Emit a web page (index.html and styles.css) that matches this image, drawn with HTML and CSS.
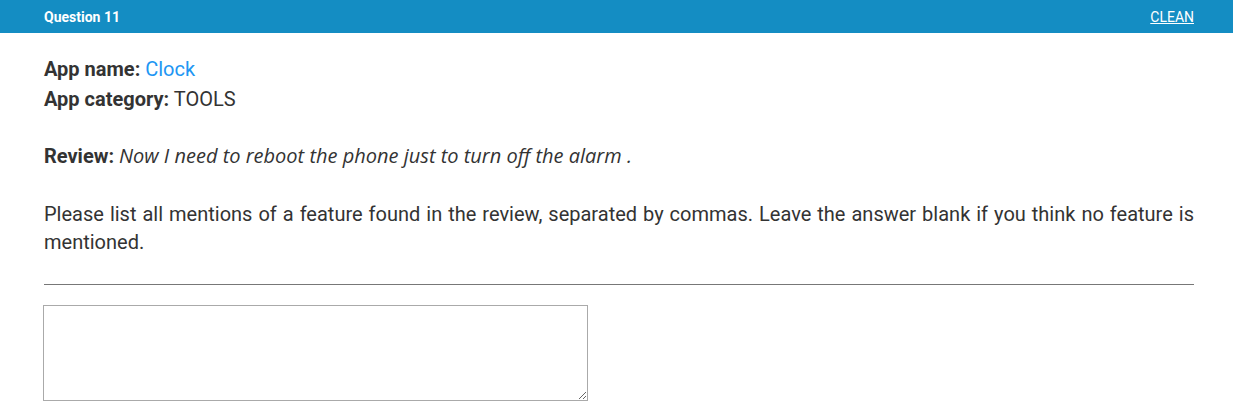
FILE: index.html
```html
<!DOCTYPE html>
<html>
<head>
<meta charset="utf-8">
<link rel="stylesheet" href="styles.css">
</head>
<body>
<div class="bar">
  <span class="title">Question 11</span>
  <a class="clean" href="#">CLEAN</a>
</div>
<div class="content">
  <div class="line"><b>App name:</b> <span class="app">Clock</span></div>
  <div class="line"><b>App category:</b> TOOLS</div>
  <div class="review"><b>Review:</b> <i>Now I need to reboot the phone just to turn off the alarm .</i></div>
  <p class="prompt">Please list all mentions of a feature found in the review, separated by commas. Leave the answer blank if you think no feature is mentioned.</p>
  <hr class="sep">
  <textarea class="answer"></textarea>
</div>
</body>
</html>
```
FILE: styles.css
```css
html, body { margin: 0; padding: 0; background: #fff; }
body { font-family: Roboto, "Liberation Sans", sans-serif; color: #333; }
.bar {
  height: 33px;
  background: #148dc3;
  display: flex;
  align-items: center;
  justify-content: space-between;
  padding: 0 39px 0 44px;
  color: #fff;
  font-size: 14px;
  font-weight: bold;
}
.clean { color: #fff; text-decoration: underline; font-size: 14px; font-weight: normal; }
.content { padding: 21px 39px 0 44px; font-size: 20px; }
.line { line-height: 30px; }
.app { color: #2196f3; }
.review { margin-top: 27px; line-height: 30px; }
.review i { font-family: "Open Sans", sans-serif; font-style: italic; font-size: 20px; }
.prompt { margin: 29px 0 0; line-height: 28px; text-align: justify; }
.sep { border: 0; border-top: 1px solid #777; margin: 28px 0 0; }
.answer {
  display: block;
  margin: 20px 0 0 -1px;
  width: 545px;
  height: 96px;
  box-sizing: border-box;
  border: 1px solid #aaa;
  padding: 2px;
}
```
